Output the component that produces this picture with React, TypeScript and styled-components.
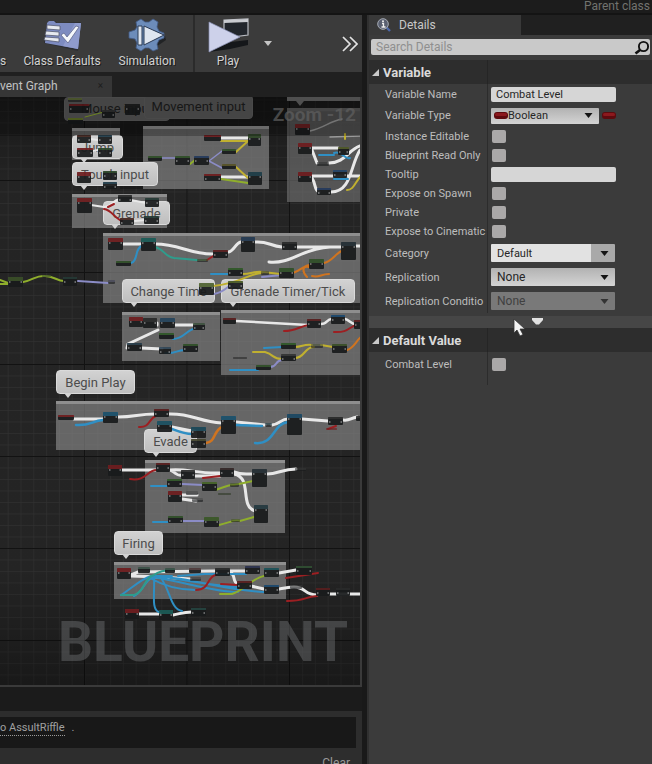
import React from "react";
import styled, { createGlobalStyle, css } from "styled-components";

const Global = createGlobalStyle`
  *, *::before, *::after { box-sizing: border-box; }
  html, body, #root { height: 100%; }
  body {
    margin: 0;
    overflow: hidden;
    background: #1b1b1b;
    color: #c4c4c4;
    font-family: Roboto, "Liberation Sans", sans-serif;
    font-size: 11px;
  }
  button, input, select { font: inherit; color: inherit; margin: 0; }
`;

/* ---------- shell ---------- */

const Page = styled.div`
  display: flex;
  flex-direction: column;
  height: 100vh;
`;

const MenuStrip = styled.header`
  display: flex;
  justify-content: flex-end;
  flex: none;
  height: 15px;
  padding-right: 2px;
  background: #1c1c1c;
  border-bottom: 2px solid #141414;
  color: #72736f;
  font-size: 12px;
  line-height: 12px;
  white-space: nowrap;
`;

const Columns = styled.div`
  display: flex;
  flex: 1;
  min-height: 0;
`;

const Workspace = styled.main`
  display: flex;
  flex-direction: column;
  flex: 1;
  min-width: 0;
  border-right: 5px solid #191919;
`;

/* ---------- toolbar ---------- */

const Toolbar = styled.div`
  display: flex;
  flex: none;
  height: 57px;
  background: #3b3b3b;
  overflow: hidden;
`;

const ToolButton = styled.button<{ $w: number }>`
  display: flex;
  flex-direction: column;
  align-items: center;
  flex: none;
  width: ${(p) => p.$w}px;
  padding: 3px 0 0;
  border: 0;
  background: none;
  color: #d2d2d2;
  font-size: 12px;
  line-height: 14px;
  white-space: nowrap;
  text-shadow: 1px 1px 0 #1c1c1c;

  svg { display: block; }
`;

const ClippedLabel = styled.span`
  padding-top: 36px;
`;

const ToolSeparator = styled.div`
  flex: none;
  width: 2px;
  margin-left: 17px;
  background: #2b2b2b;
`;

const IconButton = styled.button`
  display: flex;
  align-items: center;
  justify-content: center;
  flex: none;
  width: 24px;
  padding: 0;
  border: 0;
  background: none;
`;

const PlayOptions = styled(IconButton)`
  width: 14px;
`;

const Spring = styled.div`
  flex: 1;
`;

/* ---------- graph ---------- */

const TabStrip = styled.div`
  display: flex;
  flex: none;
  height: 25px;
  padding-top: 4px;
  background: #202020;
`;

const GraphTab = styled.button`
  display: flex;
  align-items: center;
  justify-content: space-between;
  width: 112px;
  padding: 0 9px 2px 0;
  border: 0;
  background: #363636;
  color: #c2c2c2;
  font-size: 12px;
  white-space: nowrap;

  small { color: #1d1d1d; font-size: 10px; }
`;

const Graph = styled.section`
  position: relative;
  flex: 1;
  min-height: 0;
  overflow: hidden;
  background: #262626;
  border: solid #3a3a3a;
  border-width: 0 2px 2px 0;
`;

const GridLayer = styled.svg`
  position: absolute;
  inset: 0;
  width: 100%;
  height: 100%;
`;

const NodeLayer = styled.svg`
  position: absolute;
  top: 0;
  left: 0;
`;

const CommentBox = styled.div<{ $x: number; $y: number; $w: number; $h: number; $dim?: boolean }>`
  position: absolute;
  left: ${(p) => p.$x}px;
  top: ${(p) => p.$y}px;
  width: ${(p) => p.$w}px;
  height: ${(p) => p.$h}px;
  background: ${(p) => (p.$dim ? "rgba(116,116,116,.62)" : "rgba(136,136,136,.66)")};
  border-top: 3px solid ${(p) => (p.$dim ? "#5c5c5c" : "#8e8e8e")};
`;

const Bubble = styled.div<{ $x: number; $y: number; $w: number; $dim?: boolean }>`
  position: absolute;
  left: ${(p) => p.$x}px;
  top: ${(p) => p.$y}px;
  width: ${(p) => p.$w}px;
  height: 24px;
  border-radius: 4px;
  border: 1px solid #dadada;
  background: linear-gradient(#d2d2d2, #bebebe);
  color: #4c4c4c;
  font-size: 13px;
  line-height: 24px;
  text-align: center;
  white-space: nowrap;

  &::after {
    content: "";
    position: absolute;
    left: 7px;
    top: 22px;
    border: solid transparent;
    border-width: 5px 4px 0;
    border-top-color: #d2d2d2;
  }

  ${(p) =>
    p.$dim &&
    css`
      border-color: #626262;
      background: #5c5c5c;
      color: #1f1f1f;
      line-height: 22px;
      &::after { display: none; }
    `}
`;

const TitleShade = styled.div`
  position: absolute;
  inset: 0 0 auto 0;
  height: 39px;
  background: rgba(0, 0, 0, 0.25);
`;

const ZoomText = styled.div`
  position: absolute;
  top: 7px;
  right: 4px;
  color: rgba(96, 96, 96, 0.7);
  font-size: 19px;
  font-weight: 700;
  line-height: 22px;
`;

const Watermark = styled.div`
  position: absolute;
  right: 12px;
  bottom: 8px;
  color: rgba(120, 122, 124, 0.42);
  font-size: 55px;
  font-weight: 700;
  line-height: 70px;
`;

/* ---------- compiler results ---------- */

const Results = styled.section`
  flex: none;
  height: 77px;
  padding-top: 24px;
  overflow: hidden;
  background: #1b1b1b;
`;

const ResultsBody = styled.div`
  padding: 6px 6px 0 0;
  background: #2d2d2d;
`;

const Log = styled.div`
  display: flex;
  align-items: flex-start;
  height: 31px;
  padding-top: 4px;
  background: #181818;
  color: #a0a0a0;
  line-height: 14px;

  a { color: inherit; text-decoration: none; border-bottom: 1px dotted #9a9a9a; }
  span { margin-left: 7px; }
`;

const ResultsFooter = styled.div`
  display: flex;
  justify-content: flex-end;
  padding: 8px 6px 0 0;
`;

const ClearButton = styled.button`
  padding: 0;
  border: 0;
  background: none;
  color: #9a9a9a;
  font-size: 12px;
  line-height: 14px;
`;

/* ---------- details ---------- */

const Details = styled.aside`
  display: flex;
  flex-direction: column;
  flex: none;
  width: 285px;
  background: #3b3b3b;
  border-left: 2px solid #303030;
`;

const DetailsTabs = styled.div`
  display: flex;
  flex: none;
  height: 20px;
  background: #202020;
`;

const DetailsTab = styled.button`
  display: flex;
  align-items: center;
  gap: 7px;
  width: 152px;
  padding: 0 0 0 7px;
  border: 0;
  background: #393939;
  color: #c8c8c8;
  font-size: 12px;
`;

const SearchBar = styled.label`
  display: flex;
  align-items: center;
  flex: none;
  height: 16px;
  margin: 4px 2px 5px 2px;
  border-radius: 2px;
  background: #c9c9c9;

  input {
    flex: 1;
    min-width: 0;
    height: 16px;
    padding: 0 5px;
    border: 0;
    outline: 0;
    background: none;
    color: #333;
    font-size: 12px;
  }
  input::placeholder { color: #8f8f8f; opacity: 1; }
`;

const SectionHeader = styled.h2`
  display: grid;
  grid-template-columns: 119px 1fr;
  flex: none;
  margin: 0;
  height: 24px;
  background: #2d2d2d;
`;

const SectionToggle = styled.button`
  display: flex;
  align-items: center;
  gap: 4px;
  padding: 0 0 0 3px;
  border: 0;
  border-right: 1px solid #252525;
  background: none;
  color: #dadada;
  font-size: 13px;
  font-weight: 700;
  white-space: nowrap;
`;

const Row = styled.div<{ $h: number }>`
  display: grid;
  grid-template-columns: 119px 1fr;
  flex: none;
  height: ${(p) => p.$h}px;
`;

const Name = styled.label`
  display: flex;
  align-items: center;
  padding-left: 16px;
  border-right: 1px solid #2c2c2c;
  overflow: hidden;
  color: #bdbdbd;
  white-space: nowrap;
`;

const Value = styled.div`
  display: flex;
  align-items: center;
  gap: 3px;
  padding-left: 3px;
`;

const TextBox = styled.input`
  width: 125px;
  height: 15px;
  padding: 0 5px;
  border: 0;
  border-radius: 2px;
  outline: 0;
  background: #d6d6d6;
  color: #262626;
`;

const Check = styled.input`
  appearance: none;
  width: 14px;
  height: 13px;
  margin-left: 1px;
  border-radius: 2px;
  background: #aaa8a8;
  &:checked { background: #5f7fa8; }
`;

const Picker = styled.span<{ $w: number }>`
  display: grid;
  align-items: center;
  width: ${(p) => p.$w}px;
  > * { grid-area: 1 / 1; }
  > svg { pointer-events: none; justify-self: end; margin-right: 3px; }
  > svg.chip { justify-self: start; margin-left: 3px; }
`;

type Tone = "bright" | "plain" | "off";
const fills: Record<Tone, string> = {
  bright: "linear-gradient(90deg, #e2e2e2 0 100px, #a9a9a9 100px)",
  plain: "linear-gradient(#b2b2b2, #d4d4d4)",
  off: "#797979",
};

const Select = styled.select<{ $tone: Tone; $h: number; $pad: number }>`
  appearance: none;
  width: 100%;
  height: ${(p) => p.$h}px;
  padding: 0 18px 0 ${(p) => p.$pad}px;
  border: 0;
  border-radius: 1px;
  background: ${(p) => fills[p.$tone]};
  color: ${(p) => (p.$tone === "off" ? "#404040" : "#262626")};
  font-size: ${(p) => (p.$tone === "bright" || p.$h < 18 ? 11 : 12)}px;
  opacity: 1;
`;

const Expander = styled.button`
  display: flex;
  align-items: flex-start;
  justify-content: center;
  flex: none;
  height: 12px;
  margin-top: 3px;
  padding: 2px 0 0 53px;
  border: 0;
  background: #464646;
`;

const ColumnTail = styled.div`
  flex: none;
  width: 119px;
  height: 9px;
  border-right: 1px solid #2c2c2c;
`;

const Cursor = styled.svg`
  position: absolute;
  left: 513px;
  top: 318px;
  pointer-events: none;
`;

/* ---------- icons ---------- */

const ClassDefaultsIcon = () => (
  <svg width="42" height="36" viewBox="0 0 42 36">
    <path d="M6 5l3-2h5l2 2 24-1-3 29-34-8z" fill="#23262f" opacity=".6" />
    <path d="M6 5l2-2h5l2 2h25l-3 26-33-6z" fill="#7d8bc0" />
    <path d="M40 5l-3 26-15-3L34 5z" fill="#8f9bcd" />
    <path d="M6 7l13 1v4L6 11zM5 13l13 1v4L4 17zM4 19l14 1v4L3 22z" fill="#e6e9ef" stroke="#4a4f63" strokeWidth=".7" />
    <path d="M20 17l3-2 3 4L35 8l3 1-11 16z" fill="#f5f7fb" stroke="#454d74" strokeWidth=".6" />
  </svg>
);

const SimulationIcon = () => (
  <svg width="42" height="36" viewBox="0 0 42 36">
    <path d="M22 27l17-9 1 4-13 9z" fill="#17191d" opacity=".7" />
    <path d="M10 4l5-3 4 3h4l4-3 5 3-1 5 2 4 5 2v5l-5 2-2 4 1 5-5 2-4-3h-4l-4 3-5-3 1-5-2-4-6-1v-6l6-2 2-3z" fill="#6c8cba" stroke="#445c86" strokeWidth=".8" />
    <path d="M12 8h4v19h-4zM18 8l20 9-20 10z" fill="#dfe6f0" stroke="#2b3a52" strokeWidth="1" />
  </svg>
);

const PlayIcon = () => (
  <svg width="42" height="36" viewBox="0 0 42 36">
    <path d="M17 2l24-1v16l-24 3z" fill="#22262c" stroke="#b9bcc2" strokeWidth="1.2" />
    <path d="M17 2l24-1v3l-24 1z" fill="#c9cbd0" />
    <path d="M2 34l22-10 17-2v5l-18 4z" fill="#15171a" />
    <path d="M2 4l31 15L2 34z" fill="#cdd1ea" stroke="#8a90b4" strokeWidth=".7" />
  </svg>
);

const Caret = ({ color = "#141414", w = 8 }: { color?: string; w?: number }) => (
  <svg width={w} height="5" viewBox="0 0 8 5">
    <path d="M0 0h8L4 5z" fill={color} />
  </svg>
);

const Chip = ({ className }: { className?: string }) => (
  <svg className={className} width="14" height="7" viewBox="0 0 14 7">
    <rect width="14" height="7" rx="3" fill="#5e0a0e" />
    <rect x="1" y="1" width="12" height="3" rx="1.5" fill="#8c191e" />
  </svg>
);

/* ---------- graph content; coordinates share the window origin ---------- */

const TOP = 97;

const boxes: [number, number, number, number, boolean?][] = [
  [72, 128, 48, 32],
  [143, 126, 126, 63],
  [287, 108, 80, 94, true],
  [72, 194, 95, 34],
  [103, 233, 264, 70],
  [122, 312, 98, 49],
  [221, 310, 146, 65],
  [56, 401, 310, 49],
  [145, 460, 140, 73],
  [114, 562, 172, 37],
];

const bubbles: [string, number, number, number, boolean?][] = [
  ["Mouse input", 64, 97, 106, true],
  ["Movement input", 144, 95, 109, true],
  ["Jump", 72, 135, 51],
  ["Touch input", 72, 162, 86],
  ["Grenade", 103, 201, 67],
  ["Change Time", 122, 279, 93],
  ["Grenade Timer/Tick", 221, 279, 134],
  ["Begin Play", 56, 370, 79],
  ["Evade", 144, 429, 53],
  ["Firing", 114, 531, 49],
];

const W = "#e8e8e8";
const B = "#2f8fc4";
const Y = "#c0b030";
const G = "#8fae2c";
const R = "#9c1f22";
const O = "#cf7420";
const P = "#8b8cc6";
const T = "#2f9c8c";

const wires: [string, string, number][] = [
  [W, "M90 139L98 140M93 151L98 150", 2],
  [W, "M91 205L104 207C112 207 112 200 120 199M131 200L146 203M135 221L145 220", 2],
  [R, "M104 209C112 210 114 218 122 221M108 207L114 204", 2],
  [G, "M85 117L104 112", 1],
  [P, "M162 158H175M209 161L222 151M209 161L222 168", 1.5],
  [G, "M190 164L195 160", 2],
  [W, "M221 138H248M221 177H248", 3],
  [Y, "M221 141L248 141L236 152M236 167L248 178", 2],
  [G, "M221 179L248 183", 2],
  ["#9a9a9a", "M310 131C324 128 330 121 342 119M330 137L360 136", 1.5],
  [W, "M312 148H338M312 150L317 163M329 163C345 163 348 150 360 146M312 176H360M312 178C316 184 314 190 319 192M331 192C352 192 350 165 360 150", 3],
  [B, "M319 155H334M334 153C342 150 344 160 350 158M334 179H348", 2],
  [Y, "M345 134V139M347 190C354 190 355 182 361 176", 2],
  [G, "M0 280L8 283M0 284H8M23 282C34 280 36 275 45 276C54 276 57 281 64 281", 2],
  [P, "M78 281L108 283M214 294C225 292 226 287 233 284M262 277L282 275", 2],
  [W, "M123 244H142M155 244C180 244 188 254 213 254M228 252C234 252 235 243 241 242M255 242C268 241 270 246 282 247M297 247L341 247M356 246H361M269 262C292 264 300 249 330 247", 3],
  [B, "M131 263C138 262 135 247 142 246M211 274H229", 2],
  [T, "M155 247C164 249 165 257 174 258L197 260", 2],
  [R, "M207 260L215 255", 2],
  [Y, "M242 274C252 274 254 271 262 272L281 274M213 286C242 283 247 274 262 273", 2],
  [O, "M293 273C302 270 304 265 310 265L309 267C302 265 302 272 307 277M324 263C333 261 336 252 344 250M312 276C319 278 321 274 329 274", 2],
  [W, "M157 323V325M174 325H194M158 330L128 344L127 348M141 348L162 349", 3],
  [B, "M173 339C184 339 186 330 196 328M165 353C176 354 176 350 185 350", 2],
  [W, "M236 321L308 325M321 324C328 324 326 319 332 319M345 319C350 320 350 324 356 324", 2.5],
  [R, "M284 331C296 331 300 326 309 325M334 332C348 333 349 327 356 325", 2],
  [B, "M264 348L282 347M230 370H258", 2],
  [Y, "M253 352L265 352C275 355 272 359 282 359M295 347C303 347 303 344 312 345M295 358C305 358 304 347 314 347M321 345L333 347", 2],
  [P, "M270 367C278 367 274 361 282 360", 2],
  [O, "M347 350C354 348 356 341 361 337", 2],
  [W, "M74 419H103M118 417C135 417 138 414 155 414M168 414C193 413 198 422 222 423M172 427L192 431M236 422L265 425M272 425C280 424 281 419 288 419M302 419L328 421M343 420C350 421 350 418 357 417", 3],
  [B, "M76 425C90 426 92 421 103 420M172 429C180 432 185 434 192 434M236 425L262 426M255 443C275 445 272 424 288 422", 2.5],
  [R, "M139 427C150 428 149 418 156 416M328 429L336 426", 2],
  [O, "M206 443C216 442 213 431 222 427", 2.5],
  [W, "M122 470H156M170 470C185 468 198 474 220 473M170 470C178 474 176 476 182 475M195 476H220M234 472C241 475 244 474 253 474M267 474C278 474 282 469 296 469M182 495H197M182 499L196 501", 3],
  [W, "M234 474C253 478 239 506 255 511", 3],
  [R, "M130 479C145 482 148 470 156 470M203 478L220 476", 2],
  [B, "M151 486H167M153 522H168", 2],
  [P, "M182 484L203 485M183 521H204", 2],
  [G, "M215 490C224 488 228 484 234 485L253 481M219 525C229 523 234 519 240 521L254 517", 2],
  [W, "M131 575L138 572L215 571M131 576L162 577L190 579M230 573C236 573 232 583 238 584M230 571H245M251 586L264 589M279 589C286 588 290 587 294 587C306 587 304 595 317 595M279 573L296 570M330 594H361M139 614H160M173 615C180 614 182 612 192 612", 3],
  [B, "M121 595C132 588 141 579 151 576L172 576M150 578C162 585 176 590 196 590M151 577C183 581 211 592 238 592M153 577C190 576 216 590 264 592M164 577C180 579 209 586 240 587M154 578C155 592 151 610 159 612M161 578C170 590 171 610 182 611M134 596C143 592 145 580 152 578M178 576L205 574H246", 2],
  [T, "M121 595H134C145 592 144 577 154 575C160 570 168 570 174 570", 2],
  [R, "M196 590C210 590 207 576 216 575M221 584L238 585M287 601C305 601 304 597 317 596M286 578L318 573", 2],
  [G, "M220 594L232 594C245 590 252 578 264 576", 2],
];

const nodes: [number, number, number, number, string][] = [
  [68, 98, 14, 4, G], [69, 104, 20, 9, R], [68, 118, 15, 6, G], [125, 104, 15, 11, "#222"], [102, 110, 13, 8, "#444"],
  [77, 135, 14, 8, "#5a2a20"], [98, 135, 14, 9, "#244d63"], [77, 148, 16, 9, R], [98, 148, 14, 9, "#345c2f"],
  [77, 172, 14, 11, R], [103, 171, 14, 9, "#345c2f"], [103, 182, 14, 7, "#244d63"],
  [77, 198, 15, 15, R], [118, 195, 14, 7, "#333"], [145, 198, 14, 9, "#2c4a44"], [120, 218, 14, 7, "#5a2a20"], [144, 216, 15, 8, "#2c4a44"],
  [148, 156, 14, 5, "#3d6b2f"], [175, 156, 15, 9, "#3d6b2f"], [194, 156, 15, 9, "#2d4b80"],
  [204, 135, 17, 6, R], [248, 134, 13, 12, "#3d5f2f"], [222, 149, 14, 5, "#3d6b2f"], [222, 164, 14, 5, "#7a7030"],
  [204, 174, 17, 7, R], [248, 172, 14, 13, "#205060"],
  [295, 124, 15, 11, R], [298, 143, 14, 11, R], [298, 172, 14, 10, R], [333, 170, 14, 8, "#2d5b90"], [317, 188, 14, 7, "#2d4b80"],
  [317, 162, 12, 4, "#444"], [338, 147, 11, 8, "#6b7a2f"],
  [108, 238, 15, 12, R], [141, 238, 15, 13, "#1d7f78"], [116, 261, 15, 5, "#3d6b2f"], [213, 250, 15, 8, "#7a2020"],
  [241, 237, 14, 15, "#2d4b70"], [282, 242, 15, 8, "#333"], [341, 242, 15, 18, "#2b3b44"], [309, 259, 15, 10, "#3d6b2f"],
  [279, 268, 15, 10, "#3d6b2f"], [228, 268, 15, 8, "#3d7a2f"], [228, 281, 15, 8, "#5f7a2f"], [199, 283, 15, 12, "#6f8a3f"],
  [8, 277, 15, 10, "#4d6b2f"], [63, 277, 14, 9, "#2c4a44"], [42, 275, 9, 2, "#4d6b2f"], [108, 280, 7, 4, "#555577"],
  [197, 259, 11, 3, "#3d6b2f"], [261, 271, 8, 4, "#55603f"],
  [129, 317, 14, 10, R], [143, 318, 14, 10, "#333"], [160, 318, 15, 10, "#2d5b80"], [193, 323, 12, 7, "#557055"],
  [159, 333, 15, 6, "#3d7a2f"], [127, 343, 15, 8, "#2d4b60"], [159, 347, 12, 7, "#40607a"], [183, 344, 15, 8, "#3d6b2f"],
  [223, 318, 13, 6, "#7a2020"], [307, 319, 14, 9, "#7a2020"], [331, 315, 14, 9, "#1d5f98"], [354, 320, 9, 9, "#7a2020"],
  [281, 343, 15, 6, "#3d7a2f"], [332, 344, 15, 9, "#4d6b2f"], [281, 354, 15, 7, "#444"], [256, 365, 15, 5, "#3d6b2f"],
  [311, 344, 12, 4, "#6f7a4f"], [233, 357, 14, 2, "#333"],
  [58, 415, 16, 5, R], [103, 412, 15, 11, "#1d6f98"], [154, 409, 15, 8, "#7a2020"], [157, 421, 15, 11, "#1d6f88"],
  [191, 427, 15, 11, "#1d5f78"], [191, 439, 15, 9, "#5a5a38"], [221, 416, 15, 18, "#1d6f98"], [265, 423, 7, 4, "#345c6a"],
  [287, 414, 15, 21, "#1d5f88"], [328, 417, 15, 8, "#333"], [356, 416, 6, 5, "#333"], [326, 428, 11, 2, R],
  [108, 465, 14, 11, R], [156, 463, 14, 9, "#7a2020"], [181, 470, 14, 9, "#333"], [220, 468, 14, 9, "#443030"],
  [252, 469, 15, 18, "#2c3a44"], [167, 479, 15, 8, "#3d7a2f"], [202, 482, 15, 9, "#5d8a2f"], [168, 491, 14, 11, R],
  [186, 491, 12, 4, "#666"], [192, 498, 11, 4, "#666"], [230, 483, 9, 4, "#5f7a2f"], [218, 493, 13, 2, "#3d4b2f"],
  [254, 505, 14, 18, "#2c4a54"], [168, 516, 15, 7, "#3d6b2f"], [204, 517, 15, 10, "#4d7a2f"], [231, 519, 9, 3, "#5f7a2f"],
  [295, 468, 11, 3, "#444"],
  [117, 568, 14, 11, R], [138, 567, 12, 6, "#4f6f5f"], [165, 568, 10, 5, "#4f6f5f"], [189, 568, 12, 5, "#6f4f4f"],
  [190, 577, 11, 4, "#555"], [215, 568, 15, 8, "#333"], [245, 566, 15, 8, "#353f6a"], [264, 568, 15, 9, "#1d6f78"],
  [296, 566, 16, 9, "#3d6b3f"], [237, 581, 15, 8, "#7a2020"], [264, 585, 15, 9, "#1d5f98"], [290, 585, 12, 4, "#444"],
  [316, 588, 14, 8, "#7a2020"], [336, 588, 14, 8, "#333"],
  [125, 609, 14, 10, R], [159, 610, 14, 10, "#1d7f78"], [191, 608, 15, 8, "#2c5a54"],
];

const GraphCanvas = () => (
  <Graph aria-label="Event graph">
    <GridLayer>
      <defs>
        <pattern id="minor" x="84.5" y="-9" width="12.8" height="11.5" patternUnits="userSpaceOnUse">
          <path d="M0 0H12.8M0 0V11.5" stroke="#323232" strokeWidth="1.4" fill="none" />
        </pattern>
        <pattern id="major" x="84" y="-9" width="102.5" height="92" patternUnits="userSpaceOnUse">
          <path d="M0 .5H102.5M.5 0V92" stroke="#131313" strokeWidth="1.2" fill="none" />
        </pattern>
        <linearGradient id="shade" x1="0" y1="0" x2="0" y2="1">
          <stop offset="0" stopColor="#000" stopOpacity=".35" />
          <stop offset=".15" stopColor="#000" stopOpacity=".05" />
          <stop offset=".8" stopColor="#000" stopOpacity=".05" />
          <stop offset="1" stopColor="#000" stopOpacity=".35" />
        </linearGradient>
      </defs>
      <rect width="100%" height="100%" fill="url(#minor)" />
      <rect width="100%" height="100%" fill="url(#major)" />
      <rect width="100%" height="100%" fill="url(#shade)" />
      <path d="M120 20H253V0H287V29H143V92H120z" fill="#121212" opacity=".5" />
    </GridLayer>
    {boxes.map(([x, y, w, h, dim], i) => (
      <CommentBox key={i} $x={x} $y={y - TOP} $w={w} $h={h} $dim={dim} />
    ))}
    <Watermark>BLUEPRINT</Watermark>
    {bubbles.map(([text, x, y, w, dim]) => (
      <Bubble key={text} $x={x} $y={y - TOP} $w={w} $dim={dim}>
        {text}
      </Bubble>
    ))}
    <NodeLayer width="362" height="588" viewBox="0 97 362 588" aria-hidden="true">
      <path d="M287 97H360V101H304L300 106L296 101H287z" fill="#6a6a6a" />
      {wires.map(([color, d, width], i) => (
        <path key={i} d={d} stroke={color} strokeWidth={width} fill="none" strokeLinecap="round" />
      ))}
      {nodes.map(([x, y, w, h, head], i) => (
        <g key={i} opacity={h < 5 ? 0.6 : 0.93}>
          <rect x={x} y={y} width={w} height={h} rx="1" fill="#191b1c" />
          <rect x={x} y={y} width={w} height={h > 9 ? 4 : 2} fill={head} opacity=".65" />
          {h > 6 && <path d={`M${x + 1} ${y + 5}h1.5M${x + w - 2.5} ${y + 5}h1.5`} stroke="#bbb" strokeWidth="1.2" />}
        </g>
      ))}
    </NodeLayer>
    <TitleShade />
    <ZoomText>Zoom -12</ZoomText>
  </Graph>
);

/* ---------- details rows ---------- */

const CheckRow = ({ id, label, h }: { id: string; label: string; h: number }) => (
  <Row $h={h}>
    <Name htmlFor={id}>{label}</Name>
    <Value>
      <Check id={id} type="checkbox" />
    </Value>
  </Row>
);

const TextRow = ({ id, label, value, h }: { id: string; label: string; value: string; h: number }) => (
  <Row $h={h}>
    <Name htmlFor={id}>{label}</Name>
    <Value>
      <TextBox id={id} type="text" defaultValue={value} />
    </Value>
  </Row>
);

const SelectRow = ({ id, label, value, tone }: { id: string; label: string; value: string; tone: Tone }) => (
  <Row $h={24}>
    <Name htmlFor={id}>{label}</Name>
    <Value>
      <Picker $w={124}>
        <Select id={id} $tone={tone} $h={18} $pad={6} disabled={tone === "off"}>
          <option>{value}</option>
        </Select>
        <Caret color={tone === "off" ? "#333" : undefined} w={15} />
      </Picker>
    </Value>
  </Row>
);

const Section = ({ title }: { title: string }) => (
  <SectionHeader>
    <SectionToggle aria-expanded="true">
      <svg width="7" height="7" viewBox="0 0 7 7">
        <path d="M7 0v7H0z" fill="#c9c9c9" />
      </svg>
      {title}
    </SectionToggle>
  </SectionHeader>
);

export default function App() {
  return (
    <Page>
      <Global />
      <MenuStrip>
        <span>Parent class</span>
      </MenuStrip>
      <Columns>
        <Workspace>
          <Toolbar>
            <ToolButton $w={6}>
              <ClippedLabel>s</ClippedLabel>
            </ToolButton>
            <ToolButton $w={112}>
              <ClassDefaultsIcon />
              Class Defaults
            </ToolButton>
            <ToolButton $w={58}>
              <SimulationIcon />
              Simulation
            </ToolButton>
            <ToolSeparator />
            <ToolButton $w={66}>
              <PlayIcon />
              Play
            </ToolButton>
            <PlayOptions aria-label="Play options">
              <Caret color="#c4c4c4" />
            </PlayOptions>
            <Spring />
            <IconButton aria-label="More tools">
              <svg width="16" height="16" viewBox="0 0 16 16" fill="none" stroke="#e2e2e2" strokeWidth="1.7">
                <path d="M1 1l7 7-7 7M8 1l7 7-7 7" />
              </svg>
            </IconButton>
          </Toolbar>
          <TabStrip>
            <GraphTab>
              vent Graph <small>×</small>
            </GraphTab>
          </TabStrip>
          <GraphCanvas />
          <Results>
            <ResultsBody>
              <Log>
                <a href="#assult-riffle">o AssultRiffle</a>
                <span>.</span>
              </Log>
              <ResultsFooter>
                <ClearButton>Clear</ClearButton>
              </ResultsFooter>
            </ResultsBody>
          </Results>
        </Workspace>

        <Details>
          <DetailsTabs>
            <DetailsTab>
              <svg width="16" height="14" viewBox="0 0 16 14">
                <path d="M10 9l4 4" stroke="#4c68a8" strokeWidth="2.4" />
                <circle cx="7" cy="6" r="5.3" fill="#5a6070" stroke="#a6abb5" />
                <path d="M6 5.5h1.5V9M5.5 9h4" stroke="#f0f0f0" strokeWidth="1.3" fill="none" />
                <circle cx="7" cy="3.2" r="1" fill="#f0f0f0" />
              </svg>
              Details
            </DetailsTab>
          </DetailsTabs>
          <SearchBar>
            <input type="text" placeholder="Search Details" aria-label="Search Details" />
            <svg width="16" height="15" viewBox="0 0 16 15" fill="none" stroke="#111">
              <circle cx="9.5" cy="6.5" r="4.6" strokeWidth="1.9" />
              <path d="M6 10l-4.500 3.500" strokeWidth="2.6" />
            </svg>
          </SearchBar>
          <Section title="Variable" />
          <TextRow id="name" label="Variable Name" value="Combat Level" h={21} />
          <Row $h={21}>
            <Name htmlFor="type">Variable Type</Name>
            <Value>
              <Picker $w={108}>
                <Select id="type" $tone="plain" $h={16} $pad={17}>
                  <option>Boolean</option>
                </Select>
                <Chip className="chip" />
                <Caret w={15} />
              </Picker>
              <Chip />
            </Value>
          </Row>
          <CheckRow id="editable" label="Instance Editable" h={20} />
          <CheckRow id="readonly" label="Blueprint Read Only" h={19} />
          <TextRow id="tooltip" label="Tooltip" value="" h={19} />
          <CheckRow id="spawn" label="Expose on Spawn" h={19} />
          <CheckRow id="private" label="Private" h={19} />
          <CheckRow id="cinematics" label="Expose to Cinematic" h={19} />
          <SelectRow id="category" label="Category" value="Default" tone="bright" />
          <SelectRow id="replication" label="Replication" value="None" tone="plain" />
          <SelectRow id="condition" label="Replication Conditio" value="None" tone="off" />
          <Expander aria-label="Show advanced">
            <svg width="11" height="7" viewBox="0 0 11 7">
              <path d="M0 0h11v2L7 6.500H4L0 2z" fill="#e2e2e2" />
            </svg>
          </Expander>
          <Section title="Default Value" />
          <CheckRow id="combat" label="Combat Level" h={24} />
          <ColumnTail />
        </Details>
      </Columns>
      <Cursor width="13" height="19" viewBox="0 0 13 19">
        <path d="M1 1v14l3-3 3 6 3-1.500-3-5.500h5z" fill="#f4f4f4" stroke="#333" strokeWidth=".8" />
      </Cursor>
    </Page>
  );
}
